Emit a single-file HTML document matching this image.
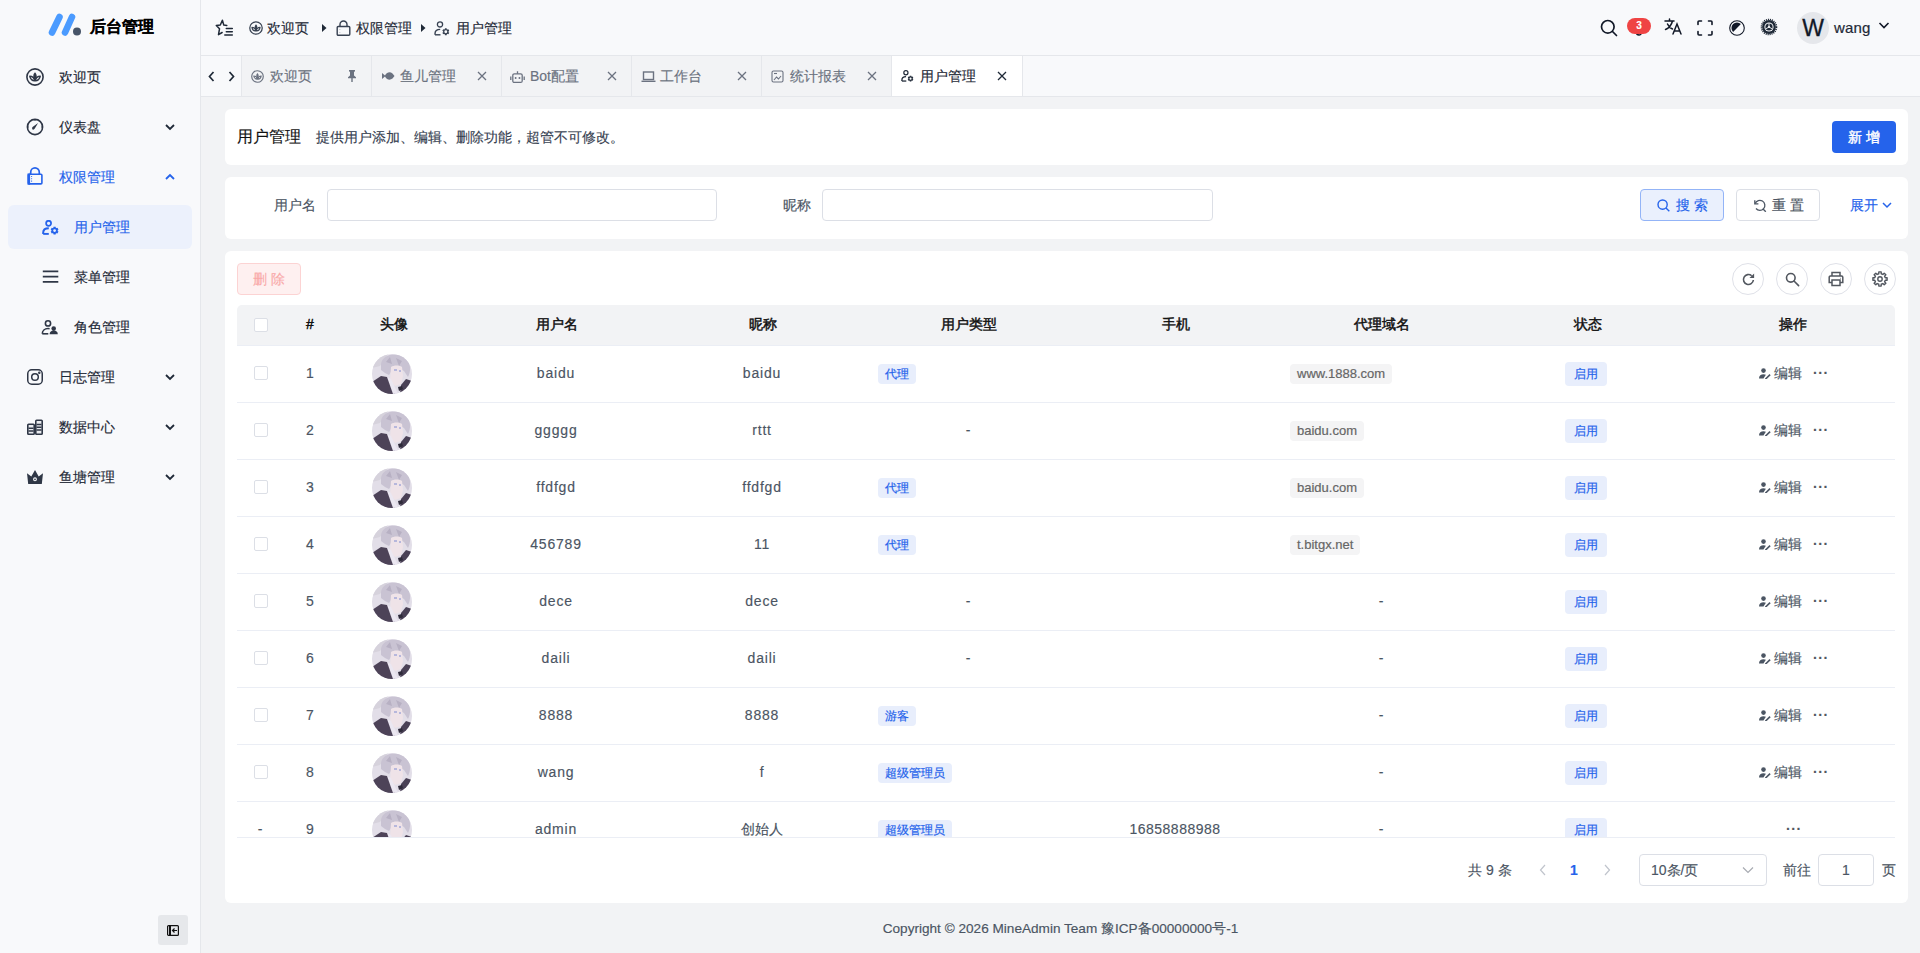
<!DOCTYPE html>
<html><head><meta charset="utf-8">
<style>
*{box-sizing:border-box;margin:0;padding:0}
html,body{width:1920px;height:953px;overflow:hidden}
body{font-family:"Liberation Sans",sans-serif;font-size:14px;color:#1f2937;background:#f2f3f5;position:relative;-webkit-text-stroke-width:.15px}
.abs{position:absolute}
svg{display:block}
/* sidebar */
#side{left:0;top:0;width:201px;height:953px;background:#f8f9fb;border-right:1px solid #e5e7eb}
.logo{left:48px;top:13px}
.logotext{left:90px;top:15.5px;font-size:15.6px;font-weight:bold;color:#000;line-height:22px}
.mi{left:8px;width:184px;height:44px;border-radius:6px}
.mi .ic{position:absolute;left:18px;top:13px}
.mi .tx{position:absolute;left:51px;top:0;line-height:44px;font-size:14px;color:#1f2937}
.mi .chev{position:absolute;left:156px;top:17px}
.mi.sub .ic{left:34px}
.mi.sub .tx{left:66px}
.mi.act{background:#ecf1fc}
.mi.blue .tx{color:#2563eb}
/* header */
#hdr{left:201px;top:0;width:1719px;height:56px;background:#f8f9fb;border-bottom:1px solid #e5e7eb}
#tabs{left:201px;top:56px;width:1719px;height:41px;background:#f8f9fb;border-bottom:1px solid #e5e7eb}
.tab{position:absolute;top:0;height:40px;width:130px;border-left:1px solid #e5e7eb;background:#f2f3f5;color:#6b7280}
.tab.act{background:#fff;color:#1f2937;border-right:1px solid #e5e7eb;width:132px}
.tab .ti{position:absolute;left:9px;top:14px}
.tab .tt{position:absolute;left:28px;top:0;line-height:40px;font-size:14px}
.tab .tc{position:absolute;left:105px;top:15px}
/* cards */
.card{background:#fff;border-radius:6px}
.btn{position:absolute;border-radius:4px;text-align:center;font-size:14px}
.inp{position:absolute;border:1px solid #dcdfe6;border-radius:4px;background:#fff}
.th{position:absolute;top:-1px;height:40px;line-height:40px;font-size:14px;color:#111;text-align:center;-webkit-text-stroke:0.45px #111}
.row{position:absolute;left:0;width:1658px;height:57px;border-bottom:1px solid #ebeef5}
.cell{position:absolute;top:-1px;height:56px;line-height:56px;text-align:center;color:#4b5563;font-size:14px}
.cb{position:absolute;left:17px;top:20px;width:14px;height:14px;border:1px solid #dcdfe6;border-radius:2px;background:#fff}
.tag{display:inline-block;height:23px;line-height:23px;padding:0 7px;border-radius:4px;font-size:12px;-webkit-text-stroke:0.2px currentColor}
.tb{background:#e8eefc;color:#2563eb}
.tg{background:#f4f4f5;color:#666}
</style></head><body>

<!-- SIDEBAR -->
<div id="side" class="abs">
  <svg class="abs logo" width="34" height="23" viewBox="0 0 34 23">
    <path d="M4 19.5 L11.5 4" stroke="#4b9bff" stroke-width="6.6" stroke-linecap="round"/>
    <path d="M17 19.5 L24 4" stroke="#4b9bff" stroke-width="6.6" stroke-linecap="round"/>
    <circle cx="29" cy="18.5" r="4" fill="#475569"/>
  </svg>
  <div class="abs logotext">后台管理</div>

  <div class="abs mi" style="top:55px">
    <svg class="ic" width="18" height="18" viewBox="0 0 18 18"><circle cx="9" cy="9" r="8.1" fill="none" stroke="#2f3746" stroke-width="1.6"/><path d="M9 4.3c1.3 1.2 1.7 2.6 1.7 4S10 11.5 9 12.6C8 11.5 7.3 10.1 7.3 8.3S7.7 5.5 9 4.3z" fill="#2f3746"/><path d="M3.8 8.2c2.3 0 4.4 1.6 5.2 4.4-2.6.3-4.8-1.6-5.2-4.4zM14.2 8.2c-2.3 0-4.4 1.6-5.2 4.4 2.6.3 4.8-1.6 5.2-4.4z" fill="none" stroke="#2f3746" stroke-width="1.5" stroke-linejoin="round"/></svg>
    <div class="tx">欢迎页</div>
  </div>
  <div class="abs mi" style="top:105px">
    <svg class="ic" width="18" height="18" viewBox="0 0 18 18"><circle cx="9" cy="9" r="7.6" fill="none" stroke="#2f3746" stroke-width="1.6"/><path d="M9 1.5v1.3M1.5 9h1.3M15.2 9h1.3" stroke="#2f3746" stroke-width="1.2"/><path d="M6.6 11.4c-.8-.8-.6-2 .3-2.7l5.2-3.6-3.3 5.5c-.6.9-1.5 1.4-2.2.8z" fill="#2f3746"/></svg>
    <div class="tx">仪表盘</div>
    <svg class="chev" width="12" height="10" viewBox="0 0 12 10"><path d="M2 3l4 4 4-4" fill="none" stroke="#1f2937" stroke-width="1.8"/></svg>
  </div>
  <div class="abs mi blue" style="top:155px">
    <svg class="ic" width="18" height="18" viewBox="0 0 18 18" style="top:12px"><path d="M4.7 7.2V5.2a4.3 4.3 0 0 1 8.6 0v2" fill="none" stroke="#2563eb" stroke-width="1.7"/><rect x="2.3" y="7.3" width="13.6" height="9.6" rx="1" fill="none" stroke="#2563eb" stroke-width="1.6"/><rect x="1.5" y="6.5" width="2.6" height="11.2" fill="#2563eb"/><path d="M5.2 9.5h.9M5.2 11.8h.9M5.2 14.1h.9" stroke="#2563eb" stroke-width="1.1"/></svg>
    <div class="tx">权限管理</div>
    <svg class="chev" width="12" height="10" viewBox="0 0 12 10"><path d="M2 7l4-4 4 4" fill="none" stroke="#2563eb" stroke-width="1.8"/></svg>
  </div>
  <div class="abs mi sub act blue" style="top:205px">
    <svg class="ic" width="18" height="16" viewBox="0 0 18 16" style="top:15px" fill="none"><circle cx="6.6" cy="3.3" r="2.5" stroke="#2563eb" stroke-width="1.7"/><path d="M1.2 14V12.6C1.2 10 3.2 8.2 6.8 8.2" stroke="#2563eb" stroke-width="2"/><path d="M1.2 13.9h5.6" stroke="#2563eb" stroke-width="1.9"/><circle cx="12.6" cy="10.6" r="2.30" stroke="#2563eb" stroke-width="1.8" fill="none"/><path d="M14.77 11.85L15.98 12.55M12.60 13.10L12.60 14.50M10.43 11.85L9.22 12.55M10.43 9.35L9.22 8.65M12.60 8.10L12.60 6.70M14.77 9.35L15.98 8.65" stroke="#2563eb" stroke-width="2.2" stroke-linecap="butt"/></svg>
    <div class="tx">用户管理</div>
  </div>
  <div class="abs mi sub" style="top:255px">
    <svg class="ic" width="18" height="16" viewBox="0 0 18 16" style="top:15px" fill="none" stroke="#2f3746" stroke-width="1.8"><path d="M.8 1.3h15.5M.8 6.6h15.5M.8 11.9h15.5"/></svg>
    <div class="tx">菜单管理</div>
  </div>
  <div class="abs mi sub" style="top:305px">
    <svg class="ic" width="18" height="16" viewBox="0 0 18 16" style="top:15px;left:33px" fill="none"><circle cx="7" cy="3.4" r="2.6" stroke="#2f3746" stroke-width="1.6"/><path d="M1.3 13.8c0-3 2.4-5.3 5.7-5.3.6 0 1.1.1 1.6.2" stroke="#2f3746" stroke-width="1.6"/><path d="M1.3 13.8h6" stroke="#2f3746" stroke-width="1.6"/><circle cx="12.7" cy="8.6" r="2.3" fill="#2f3746"/><path d="M8.6 14.2c0-2.2 1.8-3.6 4.1-3.6s4.1 1.4 4.1 3.6z" fill="#2f3746"/></svg>
    <div class="tx">角色管理</div>
  </div>
  <div class="abs mi" style="top:355px">
    <svg class="ic" width="18" height="18" viewBox="0 0 18 18" fill="none" stroke="#2f3746" stroke-width="1.5"><rect x="1.75" y="1.75" width="14.5" height="14.5" rx="4"/><circle cx="9" cy="9" r="3.3"/><circle cx="13.3" cy="4.7" r=".5" fill="#2f3746"/></svg>
    <div class="tx">日志管理</div>
    <svg class="chev" width="12" height="10" viewBox="0 0 12 10"><path d="M2 3l4 4 4-4" fill="none" stroke="#1f2937" stroke-width="1.8"/></svg>
  </div>
  <div class="abs mi" style="top:405px">
    <svg class="ic" width="18" height="18" viewBox="0 0 18 18"><rect x="1.8" y="6.2" width="6.4" height="10" rx=".8" fill="#e8eaee" stroke="#2f3746" stroke-width="1.6"/><rect x="9.8" y="2.2" width="6.4" height="14" rx=".8" fill="#e8eaee" stroke="#2f3746" stroke-width="1.6"/><path d="M2.5 10.3h5M2.5 13h5M10.5 6.5h5M10.5 9.3h5M10.5 12h5" stroke="#2f3746" stroke-width="1.4"/></svg>
    <div class="tx">数据中心</div>
    <svg class="chev" width="12" height="10" viewBox="0 0 12 10"><path d="M2 3l4 4 4-4" fill="none" stroke="#1f2937" stroke-width="1.8"/></svg>
  </div>
  <div class="abs mi" style="top:455px">
    <svg class="ic" width="18" height="18" viewBox="0 0 18 18"><path d="M1 5.3l4.3 3.2L9 2l3.7 6.5L17 5.3 15.8 16H2.2z" fill="#2f3746"/><circle cx="9" cy="11.3" r="1.4" fill="none" stroke="#f8f9fb" stroke-width="1.1"/></svg>
    <div class="tx">鱼塘管理</div>
    <svg class="chev" width="12" height="10" viewBox="0 0 12 10"><path d="M2 3l4 4 4-4" fill="none" stroke="#1f2937" stroke-width="1.8"/></svg>
  </div>

  <div class="abs" style="left:158px;top:915px;width:30px;height:30px;background:#e6e8eb;border-radius:3px">
    <svg class="abs" style="left:9px;top:10px" width="12" height="11" viewBox="0 0 12 11" fill="none" stroke="#111" stroke-width="1.2"><rect x=".6" y=".6" width="10.8" height="9.8" rx="1"/><path d="M3 .6v9.8" stroke-width="2"/><path d="M10 5.5H5.5M7.5 3.5l-2 2 2 2"/></svg>
  </div>
</div>

<!-- HEADER -->
<div id="hdr" class="abs">
<svg class="abs" style="left:13px;top:19px" width="20" height="18" viewBox="0 0 20 18" fill="none" stroke="#1f2937" stroke-width="1.5" stroke-linejoin="round" stroke-linecap="round">
 <path d="M12.8 6.4L9.8 6.1 8.4 1.3 6.3 6 2.3 6.5l3.2 3.3-1 5.9 3.6-2.2"/>
 <path d="M12.3 9.5h6M12.3 12.8h6M10.8 16.1h7.5"/>
</svg>
<svg class="abs" style="left:48px;top:21px" width="14" height="14" viewBox="0 0 18 18"><circle cx="9" cy="9" r="8" fill="none" stroke="#374151" stroke-width="1.6"/><path d="M9 4.3c1.3 1.2 1.7 2.6 1.7 4S10 11.5 9 12.6C8 11.5 7.3 10.1 7.3 8.3S7.7 5.5 9 4.3z" fill="#374151"/><path d="M3.8 8.2c2.3 0 4.4 1.6 5.2 4.4-2.6.3-4.8-1.6-5.2-4.4zM14.2 8.2c-2.3 0-4.4 1.6-5.2 4.4 2.6.3 4.8-1.6 5.2-4.4z" fill="none" stroke="#374151" stroke-width="1.5" stroke-linejoin="round"/></svg>
<div class="abs" style="left:66px;top:17px;line-height:22px;color:#1f2937">欢迎页</div>
<svg class="abs" style="left:120px;top:23px" width="6" height="10" viewBox="0 0 6 10"><path d="M1 1l4.5 4L1 9z" fill="#1f2937"/></svg>
<svg class="abs" style="left:135px;top:20px" width="15" height="16" viewBox="0 0 15 16" fill="none" stroke="#374151" stroke-width="1.4"><path d="M4 6.5V4.5a3.5 3.5 0 0 1 7 0v2"/><rect x="1.2" y="6.5" width="12.6" height="8.8" rx="1"/><path d="M3.8 9.3v.2M3.8 12v.2" stroke-width="1.2"/></svg>
<div class="abs" style="left:155px;top:17px;line-height:22px;color:#1f2937">权限管理</div>
<svg class="abs" style="left:219px;top:23px" width="6" height="10" viewBox="0 0 6 10"><path d="M1 1l4.5 4L1 9z" fill="#1f2937"/></svg>
<svg class="abs" style="left:233px;top:21px" width="16" height="15" viewBox="0 0 16 15" fill="none"><circle cx="6" cy="3.4" r="2.6" stroke="#374151" stroke-width="1.3"/><path d="M1 13.8v-1C1 10.2 3 8.4 6.2 8.4" stroke="#374151" stroke-width="1.4"/><path d="M1 13.8h5.5" stroke="#374151" stroke-width="1.4"/><circle cx="11.8" cy="10.8" r="2.10" stroke="#374151" stroke-width="1.3" fill="none"/><path d="M13.79 11.95L14.83 12.55M11.80 13.10L11.80 14.30M9.81 11.95L8.77 12.55M9.81 9.65L8.77 9.05M11.80 8.50L11.80 7.30M13.79 9.65L14.83 9.05" stroke="#374151" stroke-width="1.8"/></svg>
<div class="abs" style="left:255px;top:17px;line-height:22px;color:#1f2937">用户管理</div>

<svg class="abs" style="left:1399px;top:19px" width="18" height="18" viewBox="0 0 18 18" fill="none" stroke="#111827" stroke-width="1.7"><circle cx="7.8" cy="7.8" r="6.3"/><path d="M12.5 12.5l4 4" stroke-linecap="round"/></svg>
<svg class="abs" style="left:1434px;top:31px" width="8" height="6" viewBox="0 0 8 6" fill="none" stroke="#111827" stroke-width="1.4"><path d="M1.5 1.5a2.5 2.5 0 0 0 5 0"/></svg>
<div class="abs" style="left:1426px;top:18px;width:24px;height:16px;border-radius:8px;background:#ef4444;color:#fff;font-size:10px;line-height:16px;text-align:center;font-weight:bold">3</div>
<svg class="abs" style="left:1463px;top:18px" width="18" height="17" viewBox="0 0 18 17" fill="none" stroke="#111827" stroke-width="1.5" stroke-linecap="round"><path d="M1 3h9M5.5 1v2M8.5 3C7.5 7 5 10 1.5 11.5M3.5 6c1 2.5 3 4.2 5 5"/><path d="M9 16l4-10 4 10M10.3 13h5.4"/></svg>
<svg class="abs" style="left:1496px;top:20px" width="16" height="16" viewBox="0 0 16 16" fill="none" stroke="#111827" stroke-width="1.6" stroke-linecap="round" stroke-linejoin="round"><path d="M1 4.5V2a1 1 0 0 1 1-1h2.5M11.5 1H14a1 1 0 0 1 1 1v2.5M15 11.5V14a1 1 0 0 1-1 1h-2.5M4.5 15H2a1 1 0 0 1-1-1v-2.5"/></svg>
<svg class="abs" style="left:1528px;top:20px" width="16" height="16" viewBox="0 0 16 16"><circle cx="8" cy="8" r="7.3" fill="none" stroke="#111827" stroke-width="1.1"/><path d="M11.9 4.1A5.5 5.5 0 0 0 4.1 11.9z" fill="#111827"/></svg>
<svg class="abs" style="left:1559px;top:18px" width="18" height="18" viewBox="0 0 18 18"><circle cx="9" cy="9" r="7.5" fill="none" stroke="#1f2937" stroke-width="1.6" stroke-dasharray="1.1 .9"/><circle cx="9" cy="9" r="6.9" fill="#1f2937"/><circle cx="9" cy="9" r="4.6" fill="#f8f9fb"/><circle cx="9" cy="9" r="3.6" fill="#1f2937"/><path d="M9 9V5.2M9 9l-3.3 1.9M9 9l3.3 1.9" stroke="#f8f9fb" stroke-width=".9"/><circle cx="9" cy="9" r="1.1" fill="#f8f9fb"/></svg>
<div class="abs" style="left:1596px;top:12px;width:32px;height:32px;border-radius:50%;background:#e5e7eb;color:#111827;font-size:23px;line-height:33px;text-align:center;-webkit-text-stroke:.3px #111827">W</div>
<div class="abs" style="left:1633px;top:17px;line-height:22px;font-size:15px;color:#1f2937;letter-spacing:.2px;-webkit-text-stroke:.2px #1f2937">wang</div>
<svg class="abs" style="left:1677px;top:21px" width="12" height="9" viewBox="0 0 12 9"><path d="M1.5 2l4.5 4.5L10.5 2" fill="none" stroke="#111827" stroke-width="1.6"/></svg>
</div>
<div id="tabs" class="abs">
<div class="abs" style="left:0;top:0;width:40px;height:40px;background:#f8f9fb">
 <svg class="abs" style="left:7px;top:15px" width="7" height="11" viewBox="0 0 7 11"><path d="M5.5 1L1.5 5.5l4 4.5" fill="none" stroke="#1f2937" stroke-width="1.7"/></svg>
 <svg class="abs" style="left:27px;top:15px" width="7" height="11" viewBox="0 0 7 11"><path d="M1.5 1l4 4.5-4 4.5" fill="none" stroke="#1f2937" stroke-width="1.7"/></svg>
</div>
<div class="tab" style="left:40px"><svg class="ti" width="13" height="13" viewBox="0 0 18 18"><circle cx="9" cy="9" r="8" fill="none" stroke="#6b7280" stroke-width="1.6"/><path d="M9 4.3c1.3 1.2 1.7 2.6 1.7 4S10 11.5 9 12.6C8 11.5 7.3 10.1 7.3 8.3S7.7 5.5 9 4.3z" fill="#6b7280"/><path d="M3.8 8.2c2.3 0 4.4 1.6 5.2 4.4-2.6.3-4.8-1.6-5.2-4.4zM14.2 8.2c-2.3 0-4.4 1.6-5.2 4.4 2.6.3 4.8-1.6 5.2-4.4z" fill="none" stroke="#6b7280" stroke-width="1.5" stroke-linejoin="round"/></svg><div class="tt">欢迎页</div><svg class="tc" width="10" height="13" viewBox="0 0 10 13" style="top:13px;left:105px"><path d="M2 1h6v1.2l-1 .8v3.5l2 1.8v1H1v-1l2-1.8V3l-1-.8z M4.3 9.2h1.4V13H4.3z" fill="#6b7280"/></svg></div>
<div class="tab" style="left:170px"><svg class="ti" width="14" height="12" viewBox="0 0 14 12"><path d="M1 3l3 2.5C6 2 9 1.5 11.5 3.5L13.5 6l-2 2.5C9 10.5 6 10 4 6.5L1 9z" fill="#6b7280"/></svg><div class="tt">鱼儿管理</div><svg class="tc" width="10" height="10" viewBox="0 0 10 10"><path d="M1 1l8 8M9 1L1 9" stroke="#6b7280" stroke-width="1.3"/></svg></div>
<div class="tab" style="left:300px"><svg class="ti" width="15" height="14" viewBox="0 0 15 14" style="left:8px" fill="none" stroke="#6b7280" stroke-width="1.3"><rect x="2.8" y="3.8" width="9.4" height="8.6" rx="1.5"/><path d="M7.5 1.2v2.6M.8 6.5v3.5M14.2 6.5v3.5"/><path d="M5.6 8h.1M9.4 8h.1" stroke-width="1.8" stroke-linecap="round"/></svg><div class="tt">Bot配置</div><svg class="tc" width="10" height="10" viewBox="0 0 10 10"><path d="M1 1l8 8M9 1L1 9" stroke="#6b7280" stroke-width="1.3"/></svg></div>
<div class="tab" style="left:430px"><svg class="ti" width="15" height="13" viewBox="0 0 15 13" fill="none" stroke="#6b7280" stroke-width="1.4"><rect x="2.5" y="2" width="10" height="7.5"/><path d="M.5 11.3h14"/></svg><div class="tt">工作台</div><svg class="tc" width="10" height="10" viewBox="0 0 10 10"><path d="M1 1l8 8M9 1L1 9" stroke="#6b7280" stroke-width="1.3"/></svg></div>
<div class="tab" style="left:560px"><svg class="ti" width="13" height="13" viewBox="0 0 13 13" fill="none" stroke="#6b7280" stroke-width="1.1"><rect x="1" y="1" width="11" height="11" rx="1.5"/><path d="M3 10l2.5-3 2 2 2.5-3"/><path d="M3 3.5h3"/></svg><div class="tt">统计报表</div><svg class="tc" width="10" height="10" viewBox="0 0 10 10"><path d="M1 1l8 8M9 1L1 9" stroke="#6b7280" stroke-width="1.3"/></svg></div>
<div class="tab act" style="left:690px"><svg class="ti" width="13" height="12" viewBox="0 0 16 15" style="top:14px" fill="none"><circle cx="6" cy="3.4" r="2.6" stroke="#1f2937" stroke-width="1.5"/><path d="M1 13.8v-1C1 10.2 3 8.4 6.2 8.4" stroke="#1f2937" stroke-width="1.6"/><path d="M1 13.8h5.5" stroke="#1f2937" stroke-width="1.6"/><circle cx="11.8" cy="10.8" r="2.10" stroke="#1f2937" stroke-width="1.5" fill="none"/><path d="M13.79 11.95L14.83 12.55M11.80 13.10L11.80 14.30M9.81 11.95L8.77 12.55M9.81 9.65L8.77 9.05M11.80 8.50L11.80 7.30M13.79 9.65L14.83 9.05" stroke="#1f2937" stroke-width="2"/></svg><div class="tt">用户管理</div><svg class="tc" width="10" height="10" viewBox="0 0 10 10"><path d="M1 1l8 8M9 1L1 9" stroke="#1f2937" stroke-width="1.3"/></svg></div>
</div>

<!-- CARD 1 -->
<div class="abs card" style="left:225px;top:109px;width:1683px;height:56px">
  <div class="abs" style="left:12px;top:0;line-height:56px;font-size:16px;color:#111">用户管理</div>
  <div class="abs" style="left:91px;top:0;line-height:56px;font-size:14px;color:#374151">提供用户添加、编辑、删除功能，超管不可修改。</div>
  <div class="btn" style="left:1607px;top:12px;width:64px;height:32px;line-height:32px;background:#2563eb;color:#fff;-webkit-text-stroke:0.4px #fff">新 增</div>
</div>

<!-- CARD 2 -->
<div class="abs card" style="left:225px;top:177px;width:1683px;height:62px">
  <div class="abs" style="left:49px;top:0;line-height:56px;color:#4b5563">用户名</div>
  <div class="inp" style="left:102px;top:12px;width:390px;height:32px"></div>
  <div class="abs" style="left:558px;top:0;line-height:56px;color:#4b5563">昵称</div>
  <div class="inp" style="left:597px;top:12px;width:391px;height:32px"></div>
  <div class="btn" style="left:1415px;top:12px;width:84px;height:32px;line-height:30px;background:#eaf0fd;border:1px solid #93b4f7;color:#2563eb">
    <svg class="abs" style="left:16px;top:9px" width="13" height="13" viewBox="0 0 13 13" fill="none" stroke="#2563eb" stroke-width="1.4"><circle cx="5.6" cy="5.6" r="4.6"/><path d="M9 9l3.3 3.3"/></svg>
    <div class="abs" style="left:35px;top:0;line-height:30px">搜 索</div></div>
  <div class="btn" style="left:1511px;top:12px;width:84px;height:32px;line-height:30px;background:#fff;border:1px solid #dcdfe6;color:#4b5563">
    <svg class="abs" style="left:16px;top:9px" width="14" height="13" viewBox="0 0 14 13" fill="none" stroke="#4b5563" stroke-width="1.3"><path d="M2.2 4.5A5 5 0 1 1 3 9.5"/><path d="M1.8 1.2v3.6h3.6"/><path d="M9.8 9.8l3 3"/></svg>
    <div class="abs" style="left:35px;top:0;line-height:30px">重 置</div></div>
  <div class="abs" style="left:1625px;top:0;line-height:56px;color:#2563eb">展开</div>
  <svg class="abs" style="left:1657px;top:25px" width="10" height="7" viewBox="0 0 10 7"><path d="M1 1l4 4 4-4" fill="none" stroke="#2563eb" stroke-width="1.5"/></svg>
</div>

<!-- CARD 3 -->
<div class="abs card" style="left:225px;top:251px;width:1683px;height:652px">
  <div class="btn" style="left:12px;top:12px;width:64px;height:32px;line-height:30px;background:#fef0f0;border:1px solid #fcd3d3;color:#f9a8a8;">删 除</div>
  <div id="tbl" class="abs" style="left:12px;top:54px;width:1658px;height:533px;overflow:hidden">
    <div class="abs" style="left:0;top:0;width:1658px;height:41px;background:#f2f3f5;border-bottom:1px solid #ebeef5;border-radius:5px 5px 0 0">
<div class="cb" style="top:13px"></div><div class="th" style="left:13px;width:120px">#</div><div class="th" style="left:97px;width:120px">头像</div><div class="th" style="left:260px;width:120px">用户名</div><div class="th" style="left:466px;width:120px">昵称</div><div class="th" style="left:672px;width:120px">用户类型</div><div class="th" style="left:879px;width:120px">手机</div><div class="th" style="left:1085px;width:120px">代理域名</div><div class="th" style="left:1291px;width:120px">状态</div><div class="th" style="left:1496px;width:120px">操作</div>
    </div>
<div class="row" style="top:41px"><div class="cb"></div><div class="cell" style="left:43px;width:60px">1</div><svg class="abs" style="left:135px;top:8px" width="40" height="40" viewBox="0 0 40 40"><defs><clipPath id="ac0"><circle cx="20" cy="20" r="20"/></clipPath></defs><g clip-path="url(#ac0)"><rect width="40" height="40" fill="#e2dee8"/><path d="M0 0h16L8 12 0 14z" fill="#d6d2dc"/><path d="M9 10C10 3 17 0 24 .5S37 5 38 13c.5 4-1 8-2 10l-4-6-5-3-6 1-4 6-4-2-4-3z" fill="#c9c3d3"/><path d="M14 8l4-5 2 7zM24 4l6 3-3 5z" fill="#b7b0c3"/><path d="M19 13c3-2 8-2 11 0l1 9-2 8-6 2-5-5z" fill="#efe3e8"/><path d="M22 16h3M27 17h2" stroke="#7f8bd0" stroke-width="1"/><path d="M0 28l9-6 6 1 3 4 5 13H0z" fill="#4d4358"/><path d="M15 23l4 2 7 15h-5z" fill="#ebe7f1"/><path d="M28 40l1-9 5-6 6 2v13z" fill="#4a4156"/><path d="M26 33l4-1 1 3-4 2z" fill="#2e2a3a"/></g></svg><div class="cell" style="left:219px;width:200px;letter-spacing:.8px">baidu</div><div class="cell" style="left:425px;width:200px;letter-spacing:.8px">baidu</div><div class="abs" style="left:641px;top:18px"><span class="tag tb" style="height:20px;line-height:20px;padding:0 7px">代理</span></div><div class="abs" style="left:1053px;top:18px"><span class="tag tg" style="height:20px;line-height:20px;padding:0 7px;font-size:13px">www.1888.com</span></div><div class="abs" style="left:1328px;top:16px"><span class="tag tb" style="height:24px;line-height:24px;padding:0 9px">启用</span></div><div class="abs" style="left:1522px;top:20px;width:44px;height:16px"><svg class="abs" style="left:0;top:2px" width="12" height="11" viewBox="0 0 12 11"><circle cx="4.5" cy="2.6" r="2.3" fill="#4b5563"/><path d="M0 10.5c0-3 2-4.3 4.5-4.3 1 0 1.8.2 2.4.5L4.5 10.5z" fill="#4b5563"/><path d="M6 10.5l4.5-4.5 1.2 1.2-4.5 4.3H6z" fill="#4b5563"/></svg><div class="abs" style="left:15px;top:-3px;line-height:20px;color:#4b5563">编辑</div></div><div class="abs" style="left:1576px;top:21px;line-height:12px;color:#52575f;font-weight:bold;letter-spacing:.6px">···</div></div>
<div class="row" style="top:98px"><div class="cb"></div><div class="cell" style="left:43px;width:60px">2</div><svg class="abs" style="left:135px;top:8px" width="40" height="40" viewBox="0 0 40 40"><defs><clipPath id="ac1"><circle cx="20" cy="20" r="20"/></clipPath></defs><g clip-path="url(#ac1)"><rect width="40" height="40" fill="#e2dee8"/><path d="M0 0h16L8 12 0 14z" fill="#d6d2dc"/><path d="M9 10C10 3 17 0 24 .5S37 5 38 13c.5 4-1 8-2 10l-4-6-5-3-6 1-4 6-4-2-4-3z" fill="#c9c3d3"/><path d="M14 8l4-5 2 7zM24 4l6 3-3 5z" fill="#b7b0c3"/><path d="M19 13c3-2 8-2 11 0l1 9-2 8-6 2-5-5z" fill="#efe3e8"/><path d="M22 16h3M27 17h2" stroke="#7f8bd0" stroke-width="1"/><path d="M0 28l9-6 6 1 3 4 5 13H0z" fill="#4d4358"/><path d="M15 23l4 2 7 15h-5z" fill="#ebe7f1"/><path d="M28 40l1-9 5-6 6 2v13z" fill="#4a4156"/><path d="M26 33l4-1 1 3-4 2z" fill="#2e2a3a"/></g></svg><div class="cell" style="left:219px;width:200px;letter-spacing:.8px">ggggg</div><div class="cell" style="left:425px;width:200px;letter-spacing:.8px">rttt</div><div class="cell" style="left:631px;width:200px">-</div><div class="abs" style="left:1053px;top:18px"><span class="tag tg" style="height:20px;line-height:20px;padding:0 7px;font-size:13px">baidu.com</span></div><div class="abs" style="left:1328px;top:16px"><span class="tag tb" style="height:24px;line-height:24px;padding:0 9px">启用</span></div><div class="abs" style="left:1522px;top:20px;width:44px;height:16px"><svg class="abs" style="left:0;top:2px" width="12" height="11" viewBox="0 0 12 11"><circle cx="4.5" cy="2.6" r="2.3" fill="#4b5563"/><path d="M0 10.5c0-3 2-4.3 4.5-4.3 1 0 1.8.2 2.4.5L4.5 10.5z" fill="#4b5563"/><path d="M6 10.5l4.5-4.5 1.2 1.2-4.5 4.3H6z" fill="#4b5563"/></svg><div class="abs" style="left:15px;top:-3px;line-height:20px;color:#4b5563">编辑</div></div><div class="abs" style="left:1576px;top:21px;line-height:12px;color:#52575f;font-weight:bold;letter-spacing:.6px">···</div></div>
<div class="row" style="top:155px"><div class="cb"></div><div class="cell" style="left:43px;width:60px">3</div><svg class="abs" style="left:135px;top:8px" width="40" height="40" viewBox="0 0 40 40"><defs><clipPath id="ac2"><circle cx="20" cy="20" r="20"/></clipPath></defs><g clip-path="url(#ac2)"><rect width="40" height="40" fill="#e2dee8"/><path d="M0 0h16L8 12 0 14z" fill="#d6d2dc"/><path d="M9 10C10 3 17 0 24 .5S37 5 38 13c.5 4-1 8-2 10l-4-6-5-3-6 1-4 6-4-2-4-3z" fill="#c9c3d3"/><path d="M14 8l4-5 2 7zM24 4l6 3-3 5z" fill="#b7b0c3"/><path d="M19 13c3-2 8-2 11 0l1 9-2 8-6 2-5-5z" fill="#efe3e8"/><path d="M22 16h3M27 17h2" stroke="#7f8bd0" stroke-width="1"/><path d="M0 28l9-6 6 1 3 4 5 13H0z" fill="#4d4358"/><path d="M15 23l4 2 7 15h-5z" fill="#ebe7f1"/><path d="M28 40l1-9 5-6 6 2v13z" fill="#4a4156"/><path d="M26 33l4-1 1 3-4 2z" fill="#2e2a3a"/></g></svg><div class="cell" style="left:219px;width:200px;letter-spacing:.8px">ffdfgd</div><div class="cell" style="left:425px;width:200px;letter-spacing:.8px">ffdfgd</div><div class="abs" style="left:641px;top:18px"><span class="tag tb" style="height:20px;line-height:20px;padding:0 7px">代理</span></div><div class="abs" style="left:1053px;top:18px"><span class="tag tg" style="height:20px;line-height:20px;padding:0 7px;font-size:13px">baidu.com</span></div><div class="abs" style="left:1328px;top:16px"><span class="tag tb" style="height:24px;line-height:24px;padding:0 9px">启用</span></div><div class="abs" style="left:1522px;top:20px;width:44px;height:16px"><svg class="abs" style="left:0;top:2px" width="12" height="11" viewBox="0 0 12 11"><circle cx="4.5" cy="2.6" r="2.3" fill="#4b5563"/><path d="M0 10.5c0-3 2-4.3 4.5-4.3 1 0 1.8.2 2.4.5L4.5 10.5z" fill="#4b5563"/><path d="M6 10.5l4.5-4.5 1.2 1.2-4.5 4.3H6z" fill="#4b5563"/></svg><div class="abs" style="left:15px;top:-3px;line-height:20px;color:#4b5563">编辑</div></div><div class="abs" style="left:1576px;top:21px;line-height:12px;color:#52575f;font-weight:bold;letter-spacing:.6px">···</div></div>
<div class="row" style="top:212px"><div class="cb"></div><div class="cell" style="left:43px;width:60px">4</div><svg class="abs" style="left:135px;top:8px" width="40" height="40" viewBox="0 0 40 40"><defs><clipPath id="ac3"><circle cx="20" cy="20" r="20"/></clipPath></defs><g clip-path="url(#ac3)"><rect width="40" height="40" fill="#e2dee8"/><path d="M0 0h16L8 12 0 14z" fill="#d6d2dc"/><path d="M9 10C10 3 17 0 24 .5S37 5 38 13c.5 4-1 8-2 10l-4-6-5-3-6 1-4 6-4-2-4-3z" fill="#c9c3d3"/><path d="M14 8l4-5 2 7zM24 4l6 3-3 5z" fill="#b7b0c3"/><path d="M19 13c3-2 8-2 11 0l1 9-2 8-6 2-5-5z" fill="#efe3e8"/><path d="M22 16h3M27 17h2" stroke="#7f8bd0" stroke-width="1"/><path d="M0 28l9-6 6 1 3 4 5 13H0z" fill="#4d4358"/><path d="M15 23l4 2 7 15h-5z" fill="#ebe7f1"/><path d="M28 40l1-9 5-6 6 2v13z" fill="#4a4156"/><path d="M26 33l4-1 1 3-4 2z" fill="#2e2a3a"/></g></svg><div class="cell" style="left:219px;width:200px;letter-spacing:.8px">456789</div><div class="cell" style="left:425px;width:200px;letter-spacing:.8px">11</div><div class="abs" style="left:641px;top:18px"><span class="tag tb" style="height:20px;line-height:20px;padding:0 7px">代理</span></div><div class="abs" style="left:1053px;top:18px"><span class="tag tg" style="height:20px;line-height:20px;padding:0 7px;font-size:13px">t.bitgx.net</span></div><div class="abs" style="left:1328px;top:16px"><span class="tag tb" style="height:24px;line-height:24px;padding:0 9px">启用</span></div><div class="abs" style="left:1522px;top:20px;width:44px;height:16px"><svg class="abs" style="left:0;top:2px" width="12" height="11" viewBox="0 0 12 11"><circle cx="4.5" cy="2.6" r="2.3" fill="#4b5563"/><path d="M0 10.5c0-3 2-4.3 4.5-4.3 1 0 1.8.2 2.4.5L4.5 10.5z" fill="#4b5563"/><path d="M6 10.5l4.5-4.5 1.2 1.2-4.5 4.3H6z" fill="#4b5563"/></svg><div class="abs" style="left:15px;top:-3px;line-height:20px;color:#4b5563">编辑</div></div><div class="abs" style="left:1576px;top:21px;line-height:12px;color:#52575f;font-weight:bold;letter-spacing:.6px">···</div></div>
<div class="row" style="top:269px"><div class="cb"></div><div class="cell" style="left:43px;width:60px">5</div><svg class="abs" style="left:135px;top:8px" width="40" height="40" viewBox="0 0 40 40"><defs><clipPath id="ac4"><circle cx="20" cy="20" r="20"/></clipPath></defs><g clip-path="url(#ac4)"><rect width="40" height="40" fill="#e2dee8"/><path d="M0 0h16L8 12 0 14z" fill="#d6d2dc"/><path d="M9 10C10 3 17 0 24 .5S37 5 38 13c.5 4-1 8-2 10l-4-6-5-3-6 1-4 6-4-2-4-3z" fill="#c9c3d3"/><path d="M14 8l4-5 2 7zM24 4l6 3-3 5z" fill="#b7b0c3"/><path d="M19 13c3-2 8-2 11 0l1 9-2 8-6 2-5-5z" fill="#efe3e8"/><path d="M22 16h3M27 17h2" stroke="#7f8bd0" stroke-width="1"/><path d="M0 28l9-6 6 1 3 4 5 13H0z" fill="#4d4358"/><path d="M15 23l4 2 7 15h-5z" fill="#ebe7f1"/><path d="M28 40l1-9 5-6 6 2v13z" fill="#4a4156"/><path d="M26 33l4-1 1 3-4 2z" fill="#2e2a3a"/></g></svg><div class="cell" style="left:219px;width:200px;letter-spacing:.8px">dece</div><div class="cell" style="left:425px;width:200px;letter-spacing:.8px">dece</div><div class="cell" style="left:631px;width:200px">-</div><div class="cell" style="left:1044px;width:200px">-</div><div class="abs" style="left:1328px;top:16px"><span class="tag tb" style="height:24px;line-height:24px;padding:0 9px">启用</span></div><div class="abs" style="left:1522px;top:20px;width:44px;height:16px"><svg class="abs" style="left:0;top:2px" width="12" height="11" viewBox="0 0 12 11"><circle cx="4.5" cy="2.6" r="2.3" fill="#4b5563"/><path d="M0 10.5c0-3 2-4.3 4.5-4.3 1 0 1.8.2 2.4.5L4.5 10.5z" fill="#4b5563"/><path d="M6 10.5l4.5-4.5 1.2 1.2-4.5 4.3H6z" fill="#4b5563"/></svg><div class="abs" style="left:15px;top:-3px;line-height:20px;color:#4b5563">编辑</div></div><div class="abs" style="left:1576px;top:21px;line-height:12px;color:#52575f;font-weight:bold;letter-spacing:.6px">···</div></div>
<div class="row" style="top:326px"><div class="cb"></div><div class="cell" style="left:43px;width:60px">6</div><svg class="abs" style="left:135px;top:8px" width="40" height="40" viewBox="0 0 40 40"><defs><clipPath id="ac5"><circle cx="20" cy="20" r="20"/></clipPath></defs><g clip-path="url(#ac5)"><rect width="40" height="40" fill="#e2dee8"/><path d="M0 0h16L8 12 0 14z" fill="#d6d2dc"/><path d="M9 10C10 3 17 0 24 .5S37 5 38 13c.5 4-1 8-2 10l-4-6-5-3-6 1-4 6-4-2-4-3z" fill="#c9c3d3"/><path d="M14 8l4-5 2 7zM24 4l6 3-3 5z" fill="#b7b0c3"/><path d="M19 13c3-2 8-2 11 0l1 9-2 8-6 2-5-5z" fill="#efe3e8"/><path d="M22 16h3M27 17h2" stroke="#7f8bd0" stroke-width="1"/><path d="M0 28l9-6 6 1 3 4 5 13H0z" fill="#4d4358"/><path d="M15 23l4 2 7 15h-5z" fill="#ebe7f1"/><path d="M28 40l1-9 5-6 6 2v13z" fill="#4a4156"/><path d="M26 33l4-1 1 3-4 2z" fill="#2e2a3a"/></g></svg><div class="cell" style="left:219px;width:200px;letter-spacing:.8px">daili</div><div class="cell" style="left:425px;width:200px;letter-spacing:.8px">daili</div><div class="cell" style="left:631px;width:200px">-</div><div class="cell" style="left:1044px;width:200px">-</div><div class="abs" style="left:1328px;top:16px"><span class="tag tb" style="height:24px;line-height:24px;padding:0 9px">启用</span></div><div class="abs" style="left:1522px;top:20px;width:44px;height:16px"><svg class="abs" style="left:0;top:2px" width="12" height="11" viewBox="0 0 12 11"><circle cx="4.5" cy="2.6" r="2.3" fill="#4b5563"/><path d="M0 10.5c0-3 2-4.3 4.5-4.3 1 0 1.8.2 2.4.5L4.5 10.5z" fill="#4b5563"/><path d="M6 10.5l4.5-4.5 1.2 1.2-4.5 4.3H6z" fill="#4b5563"/></svg><div class="abs" style="left:15px;top:-3px;line-height:20px;color:#4b5563">编辑</div></div><div class="abs" style="left:1576px;top:21px;line-height:12px;color:#52575f;font-weight:bold;letter-spacing:.6px">···</div></div>
<div class="row" style="top:383px"><div class="cb"></div><div class="cell" style="left:43px;width:60px">7</div><svg class="abs" style="left:135px;top:8px" width="40" height="40" viewBox="0 0 40 40"><defs><clipPath id="ac6"><circle cx="20" cy="20" r="20"/></clipPath></defs><g clip-path="url(#ac6)"><rect width="40" height="40" fill="#e2dee8"/><path d="M0 0h16L8 12 0 14z" fill="#d6d2dc"/><path d="M9 10C10 3 17 0 24 .5S37 5 38 13c.5 4-1 8-2 10l-4-6-5-3-6 1-4 6-4-2-4-3z" fill="#c9c3d3"/><path d="M14 8l4-5 2 7zM24 4l6 3-3 5z" fill="#b7b0c3"/><path d="M19 13c3-2 8-2 11 0l1 9-2 8-6 2-5-5z" fill="#efe3e8"/><path d="M22 16h3M27 17h2" stroke="#7f8bd0" stroke-width="1"/><path d="M0 28l9-6 6 1 3 4 5 13H0z" fill="#4d4358"/><path d="M15 23l4 2 7 15h-5z" fill="#ebe7f1"/><path d="M28 40l1-9 5-6 6 2v13z" fill="#4a4156"/><path d="M26 33l4-1 1 3-4 2z" fill="#2e2a3a"/></g></svg><div class="cell" style="left:219px;width:200px;letter-spacing:.8px">8888</div><div class="cell" style="left:425px;width:200px;letter-spacing:.8px">8888</div><div class="abs" style="left:641px;top:18px"><span class="tag tb" style="height:20px;line-height:20px;padding:0 7px">游客</span></div><div class="cell" style="left:1044px;width:200px">-</div><div class="abs" style="left:1328px;top:16px"><span class="tag tb" style="height:24px;line-height:24px;padding:0 9px">启用</span></div><div class="abs" style="left:1522px;top:20px;width:44px;height:16px"><svg class="abs" style="left:0;top:2px" width="12" height="11" viewBox="0 0 12 11"><circle cx="4.5" cy="2.6" r="2.3" fill="#4b5563"/><path d="M0 10.5c0-3 2-4.3 4.5-4.3 1 0 1.8.2 2.4.5L4.5 10.5z" fill="#4b5563"/><path d="M6 10.5l4.5-4.5 1.2 1.2-4.5 4.3H6z" fill="#4b5563"/></svg><div class="abs" style="left:15px;top:-3px;line-height:20px;color:#4b5563">编辑</div></div><div class="abs" style="left:1576px;top:21px;line-height:12px;color:#52575f;font-weight:bold;letter-spacing:.6px">···</div></div>
<div class="row" style="top:440px"><div class="cb"></div><div class="cell" style="left:43px;width:60px">8</div><svg class="abs" style="left:135px;top:8px" width="40" height="40" viewBox="0 0 40 40"><defs><clipPath id="ac7"><circle cx="20" cy="20" r="20"/></clipPath></defs><g clip-path="url(#ac7)"><rect width="40" height="40" fill="#e2dee8"/><path d="M0 0h16L8 12 0 14z" fill="#d6d2dc"/><path d="M9 10C10 3 17 0 24 .5S37 5 38 13c.5 4-1 8-2 10l-4-6-5-3-6 1-4 6-4-2-4-3z" fill="#c9c3d3"/><path d="M14 8l4-5 2 7zM24 4l6 3-3 5z" fill="#b7b0c3"/><path d="M19 13c3-2 8-2 11 0l1 9-2 8-6 2-5-5z" fill="#efe3e8"/><path d="M22 16h3M27 17h2" stroke="#7f8bd0" stroke-width="1"/><path d="M0 28l9-6 6 1 3 4 5 13H0z" fill="#4d4358"/><path d="M15 23l4 2 7 15h-5z" fill="#ebe7f1"/><path d="M28 40l1-9 5-6 6 2v13z" fill="#4a4156"/><path d="M26 33l4-1 1 3-4 2z" fill="#2e2a3a"/></g></svg><div class="cell" style="left:219px;width:200px;letter-spacing:.8px">wang</div><div class="cell" style="left:425px;width:200px;letter-spacing:.8px">f</div><div class="abs" style="left:641px;top:18px"><span class="tag tb" style="height:20px;line-height:20px;padding:0 7px">超级管理员</span></div><div class="cell" style="left:1044px;width:200px">-</div><div class="abs" style="left:1328px;top:16px"><span class="tag tb" style="height:24px;line-height:24px;padding:0 9px">启用</span></div><div class="abs" style="left:1522px;top:20px;width:44px;height:16px"><svg class="abs" style="left:0;top:2px" width="12" height="11" viewBox="0 0 12 11"><circle cx="4.5" cy="2.6" r="2.3" fill="#4b5563"/><path d="M0 10.5c0-3 2-4.3 4.5-4.3 1 0 1.8.2 2.4.5L4.5 10.5z" fill="#4b5563"/><path d="M6 10.5l4.5-4.5 1.2 1.2-4.5 4.3H6z" fill="#4b5563"/></svg><div class="abs" style="left:15px;top:-3px;line-height:20px;color:#4b5563">编辑</div></div><div class="abs" style="left:1576px;top:21px;line-height:12px;color:#52575f;font-weight:bold;letter-spacing:.6px">···</div></div>
<div class="row" style="top:497px"><div class="cell" style="left:0;width:46px">-</div><div class="cell" style="left:43px;width:60px">9</div><svg class="abs" style="left:135px;top:8px" width="40" height="40" viewBox="0 0 40 40"><defs><clipPath id="ac8"><circle cx="20" cy="20" r="20"/></clipPath></defs><g clip-path="url(#ac8)"><rect width="40" height="40" fill="#e2dee8"/><path d="M0 0h16L8 12 0 14z" fill="#d6d2dc"/><path d="M9 10C10 3 17 0 24 .5S37 5 38 13c.5 4-1 8-2 10l-4-6-5-3-6 1-4 6-4-2-4-3z" fill="#c9c3d3"/><path d="M14 8l4-5 2 7zM24 4l6 3-3 5z" fill="#b7b0c3"/><path d="M19 13c3-2 8-2 11 0l1 9-2 8-6 2-5-5z" fill="#efe3e8"/><path d="M22 16h3M27 17h2" stroke="#7f8bd0" stroke-width="1"/><path d="M0 28l9-6 6 1 3 4 5 13H0z" fill="#4d4358"/><path d="M15 23l4 2 7 15h-5z" fill="#ebe7f1"/><path d="M28 40l1-9 5-6 6 2v13z" fill="#4a4156"/><path d="M26 33l4-1 1 3-4 2z" fill="#2e2a3a"/></g></svg><div class="cell" style="left:219px;width:200px;letter-spacing:.8px">admin</div><div class="cell" style="left:425px;width:200px;">创始人</div><div class="abs" style="left:641px;top:18px"><span class="tag tb" style="height:20px;line-height:20px;padding:0 7px">超级管理员</span></div><div class="cell" style="left:838px;width:200px;letter-spacing:.5px">16858888988</div><div class="cell" style="left:1044px;width:200px">-</div><div class="abs" style="left:1328px;top:16px"><span class="tag tb" style="height:24px;line-height:24px;padding:0 9px">启用</span></div><div class="abs" style="left:1549px;top:21px;line-height:12px;color:#52575f;font-weight:bold;letter-spacing:.6px">···</div></div>

<div class="abs" style="left:0;top:532px;width:1658px;height:1px;background:#ebeef5"></div>
  </div>

<div class="abs" style="left:1507px;top:12px;width:32px;height:32px;border:1px solid #dfe1e8;border-radius:50%">
 <svg class="abs" style="left:8px;top:8px" width="15" height="15" viewBox="0 0 16 16" fill="none" stroke="#52575f" stroke-width="1.7"><path d="M13.2 8.5a5.3 5.3 0 1 1-1.8-4.5"/><path d="M14 1.5v5h-5z" fill="#52575f" stroke="none"/></svg>
</div>
<div class="abs" style="left:1551px;top:12px;width:32px;height:32px;border:1px solid #dfe1e8;border-radius:50%">
 <svg class="abs" style="left:8px;top:8px" width="15" height="15" viewBox="0 0 15 15" fill="none" stroke="#52575f" stroke-width="1.6"><circle cx="5.8" cy="5.8" r="4.3"/><path d="M9 9l4.6 4.6" stroke-linecap="round"/></svg>
</div>
<div class="abs" style="left:1595px;top:12px;width:32px;height:32px;border:1px solid #dfe1e8;border-radius:50%">
 <svg class="abs" style="left:7px;top:7px" width="16" height="16" viewBox="0 0 16 16" fill="none" stroke="#52575f" stroke-width="1.5"><path d="M4 5V1.5h8V5"/><path d="M4 11.5H1.2V6.2a1.2 1.2 0 0 1 1.2-1.2h11.2a1.2 1.2 0 0 1 1.2 1.2v5.3H12"/><rect x="4" y="9" width="8" height="5.5"/><path d="M12.2 7.3h.6" stroke-width="1"/></svg>
</div>
<div class="abs" style="left:1639px;top:12px;width:32px;height:32px;border:1px solid #dfe1e8;border-radius:50%">
 <svg class="abs" style="left:7px;top:7px" width="16" height="16" viewBox="0 0 16 16" fill="none" stroke="#52575f" stroke-width="1.4" stroke-linejoin="round"><path d="M13.26 6.78 L15.10 6.82 L15.10 9.18 L13.26 9.22 L12.58 10.86 L13.86 12.19 L12.19 13.86 L10.86 12.58 L9.22 13.26 L9.18 15.10 L6.82 15.10 L6.78 13.26 L5.14 12.58 L3.81 13.86 L2.14 12.19 L3.42 10.86 L2.74 9.22 L0.90 9.18 L0.90 6.82 L2.74 6.78 L3.42 5.14 L2.14 3.81 L3.81 2.14 L5.14 3.42 L6.78 2.74 L6.82 0.90 L9.18 0.90 L9.22 2.74 L10.86 3.42 L12.19 2.14 L13.86 3.81 L12.58 5.14z"/><circle cx="8" cy="8" r="2.2"/></svg>
</div>

<div class="abs" style="left:1243px;top:608px;line-height:22px;color:#4b5563">共 9 条</div>
<svg class="abs" style="left:1314px;top:613px" width="7" height="12" viewBox="0 0 7 12"><path d="M6 1L1.5 6 6 11" fill="none" stroke="#c0c4cc" stroke-width="1.2"/></svg>
<div class="abs" style="left:1345px;top:608px;line-height:22px;color:#2563eb;font-weight:bold">1</div>
<svg class="abs" style="left:1379px;top:613px" width="7" height="12" viewBox="0 0 7 12"><path d="M1 1l4.5 5L1 11" fill="none" stroke="#c0c4cc" stroke-width="1.2"/></svg>
<div class="inp" style="left:1414px;top:603px;width:128px;height:32px;border-color:#dcdfe6">
 <div class="abs" style="left:11px;top:4px;line-height:22px;color:#4b5563">10条/页</div>
 <svg class="abs" style="left:102px;top:11px" width="12" height="8" viewBox="0 0 12 8"><path d="M1 1.5l5 5 5-5" fill="none" stroke="#a8abb2" stroke-width="1.2"/></svg>
</div>
<div class="abs" style="left:1558px;top:608px;line-height:22px;color:#4b5563">前往</div>
<div class="inp" style="left:1593px;top:603px;width:56px;height:32px;text-align:center;line-height:30px;color:#4b5563">1</div>
<div class="abs" style="left:1657px;top:608px;line-height:22px;color:#4b5563">页</div>

</div>

<div class="abs" style="left:201px;top:904px;width:1719px;height:50px;line-height:50px;text-align:center;font-size:13.6px;color:#4b5563">Copyright © 2026 MineAdmin Team 豫ICP备00000000号-1</div>

</body></html>
